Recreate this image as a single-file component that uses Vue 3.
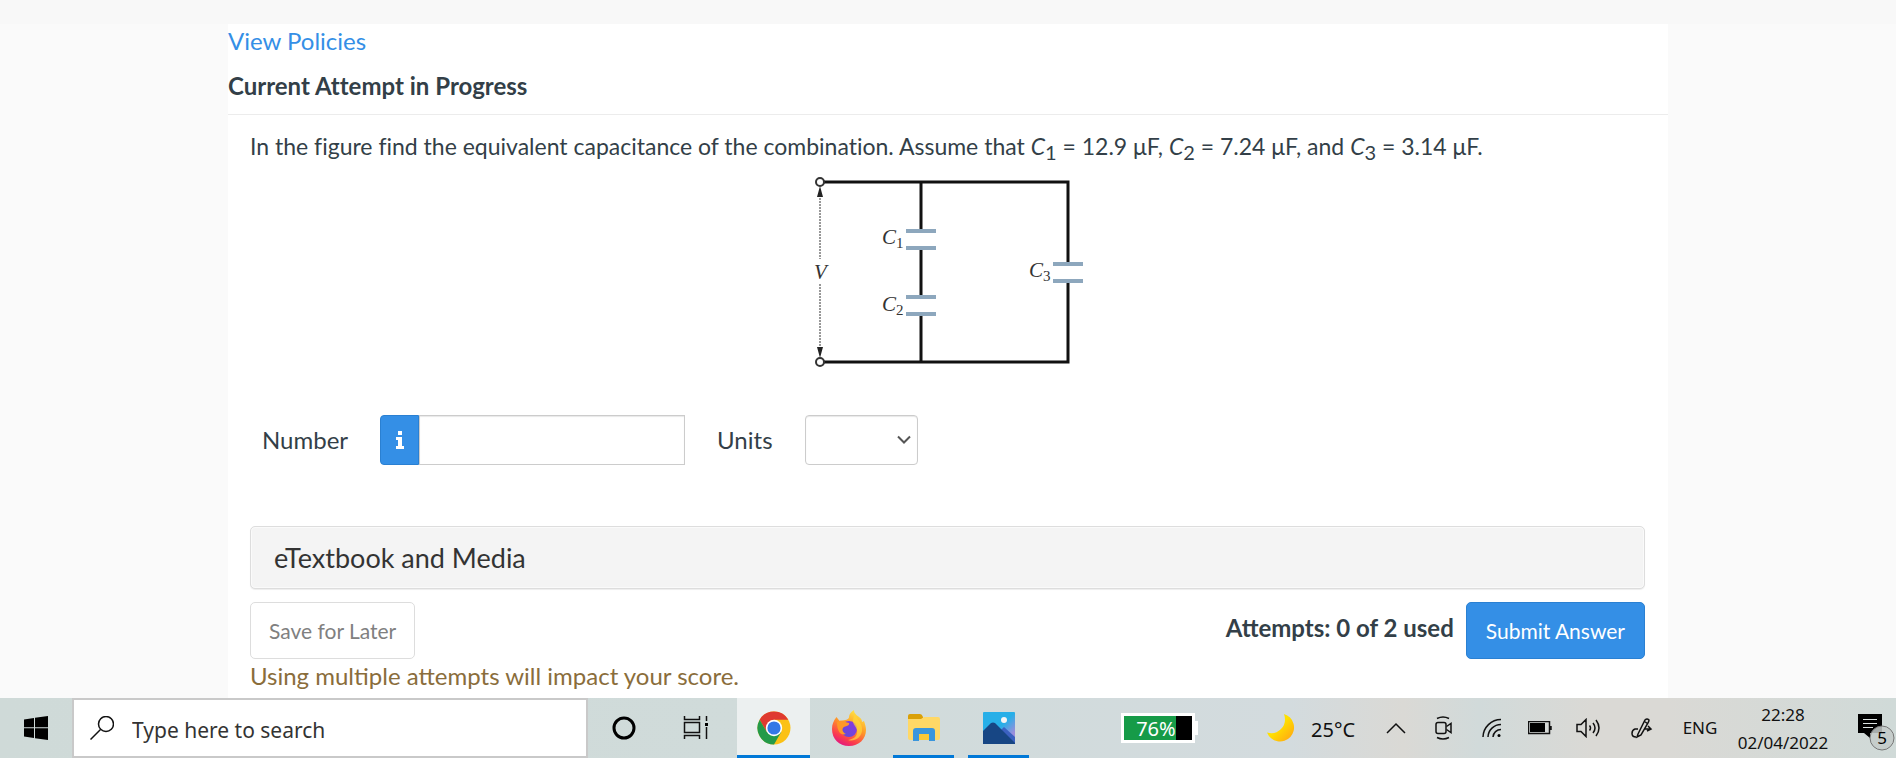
<template>
  <div class="screen">
    <main class="page">
      <section class="panel">
        <a class="policies" href="#policies">View Policies</a>
        <h1 class="status">Current Attempt in Progress</h1>

        <form class="question" @submit.prevent>
          <p class="prompt">
            In the figure find the equivalent capacitance of the combination. Assume that
            <template v-for="(c, i) in capacitors" :key="c.sub">
              <template v-if="i === 2">and </template><i>C</i><sub>{{ c.sub }}</sub> = {{ c.value }} μF{{ i === 2 ? '.' : ', ' }}
            </template>
          </p>

          <svg class="circuit" viewBox="0 0 274 192" role="img" aria-label="Circuit with three capacitors">
            <g class="wire">
              <path d="M9 10H257V93M257 110V190H9M110 10V60M110 77V126M110 143V190" />
            </g>
            <g class="plate">
              <path d="M95 59h30M95 76h30M95 125h30M95 142h30M242 92h30M242 109h30" />
            </g>
            <path class="measure" d="M9 20V87M9 112V180" />
            <path d="M9 14l3 11H6zM9 186l3 -11H6z" fill="#222" />
            <circle class="node" cx="9" cy="10" r="4" />
            <circle class="node" cx="9" cy="190" r="4" />
            <text x="3" y="107">V</text>
            <text x="71" y="72">C<tspan class="index" dy="4">1</tspan></text>
            <text x="71" y="139">C<tspan class="index" dy="4">2</tspan></text>
            <text x="218" y="105">C<tspan class="index" dy="4">3</tspan></text>
          </svg>

          <div class="answer">
            <label for="number">Number</label>
            <div class="number-group">
              <button type="button" class="info" aria-label="Information">
                <svg viewBox="0 0 10 18" width="10" height="18">
                  <path fill="#fff" d="M3 0h4v4H3zM1 6h6v9h2v3H1v-3h2V9H1z" />
                </svg>
              </button>
              <input id="number" v-model="number" type="text" autocomplete="off" />
            </div>
            <label for="units">Units</label>
            <div class="select-wrap">
              <select id="units" v-model="units">
                <option value=""></option>
                <option value="uF">μF</option>
              </select>
              <svg class="caret" viewBox="0 0 14 10" width="14" height="10">
                <path d="M1 1.500l6 6 6-6" />
              </svg>
            </div>
          </div>

          <button type="button" class="etextbook">eTextbook and Media</button>

          <div class="actions">
            <button type="button" class="btn save">Save for Later</button>
            <span class="attempts">Attempts: 0 of 2 used</span>
            <button type="submit" class="btn submit">Submit Answer</button>
          </div>
          <p class="warning">Using multiple attempts will impact your score.</p>
        </form>
      </section>
    </main>

    <footer class="taskbar">
      <button class="start" aria-label="Start">
        <svg viewBox="0 0 24 24" width="24" height="24">
          <path d="M0 3.500L10 2v9.300H0zM11 1.800L24 0v11.300H11zM0 12.300h10V22L0 20.500zM11 12.300h13V24l-13-1.800z" />
        </svg>
      </button>
      <label class="search">
        <svg class="line" viewBox="0 0 24 24" width="24" height="24">
          <circle cx="16" cy="8" r="7.500" />
          <path d="M10.500 13.500L.5 23.500" />
        </svg>
        <input type="text" placeholder="Type here to search" aria-label="Type here to search" />
      </label>
      <button class="tool" aria-label="Cortana">
        <svg viewBox="0 0 24 24" width="24" height="24">
          <circle cx="12" cy="12" r="10" fill="none" stroke="#000" stroke-width="3" />
        </svg>
      </button>
      <button class="tool" aria-label="Task view">
        <svg class="line" viewBox="0 0 26 24" width="26" height="24">
          <path d="M1.500 0v3.500h15V0M1.500 6.500h15v10h-15zM1.500 23v-3.500h15V23M23.500 0v5M23.500 11v12" />
          <path d="M22 7h3v3h-3z" fill="#000" stroke="none" />
        </svg>
      </button>

      <div class="apps">
        <button class="app active open" aria-label="Chrome">
          <svg viewBox="0 0 34 34" width="34" height="34">
            <circle cx="17" cy="17" r="16.500" fill="#fbc116" />
            <path d="M2.700 8.700A16.500 16.500 0 0 1 31.300 8.700H17L9.800 21.100z" fill="#df3a30" />
            <path d="M2.700 8.700A16.500 16.500 0 0 0 17 33.500L24.200 21.100H9.800z" fill="#249a49" />
            <circle cx="17" cy="17" r="8.200" fill="#fff" />
            <circle cx="17" cy="17" r="6.600" fill="#3478e6" />
          </svg>
        </button>
        <button class="app" aria-label="Firefox">
          <svg viewBox="0 0 34 36" width="34" height="36">
            <defs>
              <linearGradient id="fox" x1=".8" y1="0" x2=".3" y2="1">
                <stop offset="0" stop-color="#fff04a" />
                <stop offset=".45" stop-color="#ff9a27" />
                <stop offset=".8" stop-color="#fb3b4e" />
                <stop offset="1" stop-color="#e01783" />
              </linearGradient>
              <linearGradient id="globe" x1="1" y1="0" x2="0" y2="1">
                <stop offset="0" stop-color="#8f35e0" />
                <stop offset="1" stop-color="#5c50d6" />
              </linearGradient>
            </defs>
            <path fill="url(#fox)" d="M4.500 7l3 4 3-.5C15 10 17 9 17 7c0-3 2-5 5-7 0 4 3 5 5 7 2 1 3 3 3 5l2-1c1 3 2 6 2 9 0 9-7 16-17 16S0 29 0 19c0-5 1.500-8 4.500-12z" />
            <circle cx="17" cy="19" r="8" fill="url(#globe)" />
            <path fill="#ff9826" d="M5 12c4-3 8 0 12 1 1 2-2 3-5 4-3 2-1 6 2 7-5 2-9-2-9-12z" />
            <path fill="#ffd53a" d="M23 3c1 7 8 9 7 18-1 7-8 11-14 9 6-1 10-4 9-10-1-4-4-5-4-9 0-3 1-5 2-8z" opacity=".7" />
          </svg>
        </button>
        <button class="app open" aria-label="File Explorer">
          <svg viewBox="0 0 32 28" width="32" height="28">
            <path fill="#daa008" d="M0 6V2q0-2 2-2h10q2 0 3 3v3z" />
            <path fill="#ffd866" d="M0 5h13l3-2h14q2 0 2 2v19q0 2-2 2H2q-2 0-2-2z" />
            <path fill="#fbc937" d="M11 19h10v7H11z" />
            <path fill="#3a96dc" d="M5 27V17q0-3 3-3h16q3 0 3 3v10h-6v-7H11v7z" />
          </svg>
        </button>
        <button class="app open" aria-label="Photos">
          <svg viewBox="0 0 32 32" width="32" height="32">
            <defs>
              <linearGradient id="sky" x1="0" y1="0" x2="1" y2="1">
                <stop offset=".5" stop-color="#27afe8" />
                <stop offset=".8" stop-color="#9a8edc" />
              </linearGradient>
            </defs>
            <rect width="32" height="32" rx="1" fill="url(#sky)" />
            <path fill="#3b61c0" d="M16 20l5-5 11 10v7H16z" />
            <path fill="#174684" d="M0 19l8-8q2-1 4 0l20 20v1H0z" />
            <circle cx="21" cy="8" r="3" fill="#f5f5f5" />
          </svg>
        </button>
      </div>

      <div class="charge">
        <div class="charge-body">
          <div class="charge-level" :style="{ width: charge + '%' }">{{ charge }}%</div>
        </div>
        <div class="charge-tip"></div>
      </div>

      <button class="weather">
        <svg viewBox="0 0 28 28" width="28" height="28">
          <defs>
            <linearGradient id="moon" x1="0" y1="0" x2="1" y2="1">
              <stop offset=".45" stop-color="#ffe000" />
              <stop offset="1" stop-color="#ff9f16" />
            </linearGradient>
          </defs>
          <path fill="url(#moon)" d="M17 0A14 14 0 1 1 0 18.500Q8 21 14 15T17 0z" />
        </svg>
        <span>25°C</span>
      </button>

      <button class="tray" aria-label="Show hidden icons">
        <svg class="line" viewBox="0 0 20 12" width="20" height="12"><path d="M1 11l9-9 9 9" /></svg>
      </button>
      <button class="tray" aria-label="Meet now">
        <svg class="line" viewBox="0 0 18 24" width="18" height="24">
          <rect x="1" y="6.500" width="10" height="11" rx="2" />
          <path d="M11.500 10.500l4.500-3v9l-4.500-3M2 2.500q6-3 12 0M2 21.500q6 3 12 0" />
        </svg>
      </button>
      <button class="tray" aria-label="Wi-Fi">
        <svg class="line" viewBox="0 0 20 20" width="20" height="20">
          <path d="M1 19A18 18 0 0 1 19 1.500M6 19A13 13 0 0 1 19 6.500M11 19A8 8 0 0 1 19 11.500" />
          <circle cx="17" cy="17.500" r="1.500" fill="#000" stroke="none" />
        </svg>
      </button>
      <button class="tray" aria-label="Battery">
        <svg class="line" viewBox="0 0 24 14" width="24" height="14">
          <path d="M.5.5h21v12H.5zM23 5v4" />
          <path d="M2 2h15v9H2z" fill="#000" stroke="none" />
        </svg>
      </button>
      <button class="tray" aria-label="Volume">
        <svg class="line" viewBox="0 0 24 20" width="24" height="20">
          <path d="M1 6.500h4l5-5v17l-5-5H1zM13.500 7.500q2 2.500 0 5M17 5q4 5 0 10M20 2q6 8 0 16" />
        </svg>
      </button>
      <button class="tray pen" aria-label="Windows Ink">
        <svg class="line" viewBox="0 0 22 22" width="22" height="22">
          <path d="M7 17L14 3q2-2 4 0 0 1-1 3L10 18l-4 2zM13 4l4 3M7 12H4q-3 1-3 4.500T5 20M14 12h6M17 9l3 3-4 2" />
        </svg>
      </button>
      <button class="language">ENG</button>
      <button class="clock">
        <time>22:28</time>
        <time>02/04/2022</time>
      </button>
      <button class="notifications" aria-label="5 notifications">
        <svg viewBox="0 0 38 38" width="38" height="38">
          <path d="M0 1h24v19H12v5l-6-5H0z" />
          <path d="M5 6.500h14M5 10.500h14M5 14.500h10" stroke="#dce2e1" />
          <circle cx="24" cy="25" r="12" fill="#c4cac9" fill-opacity=".85" stroke="#777" />
          <text x="24" y="31" text-anchor="middle">5</text>
        </svg>
      </button>
    </footer>
  </div>
</template>

<script setup>
import { ref } from 'vue'

const number = ref('')
const units = ref('')
const charge = ref(76)

const capacitors = [
  { sub: 1, value: '12.9' },
  { sub: 2, value: '7.24' },
  { sub: 3, value: '3.14' },
]
</script>

<style>
body {
  margin: 0;
}
</style>

<style scoped>
.screen {
  display: flex;
  flex-direction: column;
  height: 100vh;
  overflow: hidden;
  box-sizing: border-box;
  font-family: Lato, sans-serif;
  font-size: 24px;
  line-height: 34px;
  color: #333f48;
  background: #fafafa;
}
.screen * {
  box-sizing: border-box;
}
button,
input,
select {
  margin: 0;
  padding: 0;
  font: inherit;
  color: inherit;
  border: 0;
  background: none;
}

.page {
  flex: 1;
  min-height: 0;
  display: flex;
  justify-content: center;
  border-top: 24px solid #f8f8f8;
}
.panel {
  flex: 0 1 1440px;
  background: #fff;
}
.policies {
  display: block;
  color: #348fe6;
  text-decoration: none;
}
.status {
  margin: 0;
  padding: 11px 0;
  font-size: 24px;
  font-weight: 700;
  font-variant-ligatures: none;
  border-bottom: 1px solid #ececec;
}
.question {
  padding: 14px 23px 0 22px;
}
.prompt {
  margin: 0;
  font-size: 23px;
  font-variant-ligatures: none;
}
.prompt sub {
  font-size: 20px;
  line-height: 0;
  vertical-align: -5px;
}

.circuit {
  display: block;
  width: 274px;
  height: 192px;
  margin: 9px auto 0;
  overflow: visible;
  font: italic 21px "Liberation Serif", serif;
  fill: #333;
}
.wire {
  fill: none;
  stroke: #111;
  stroke-width: 3;
}
.plate {
  stroke: #8da7bd;
  stroke-width: 4;
}
.measure {
  stroke: #333;
  stroke-dasharray: 2 1;
}
.node {
  fill: #fff;
  stroke: #333;
  stroke-width: 2;
}
.index {
  font-size: 15px;
  font-style: normal;
}

.answer {
  display: flex;
  align-items: center;
  gap: 32px;
  margin-top: 51px;
  padding-left: 12px;
}
.number-group {
  display: flex;
  width: 305px;
  height: 50px;
}
.info {
  display: flex;
  align-items: center;
  justify-content: center;
  width: 39px;
  background: #348fe6;
  border: 1px solid #2a80d2;
  border-radius: 4px 0 0 4px;
}
.number-group input {
  flex: 1;
  min-width: 0;
  padding: 0 12px;
  border: 1px solid #ccc;
  box-shadow: inset 0 1px 1px #e8e8e8;
}
.select-wrap {
  display: grid;
  align-items: center;
}
.select-wrap > * {
  grid-area: 1 / 1;
}
.select-wrap select {
  appearance: none;
  width: 113px;
  height: 50px;
  padding: 0 12px;
  border: 1px solid #ccc;
  border-radius: 4px;
  background: #fff;
  box-shadow: inset 0 1px 1px #e8e8e8;
}
.caret {
  justify-self: end;
  margin-right: 7px;
  fill: none;
  stroke: #555;
  stroke-width: 2;
  pointer-events: none;
}

.etextbook {
  display: block;
  width: 100%;
  height: 63px;
  margin-top: 61px;
  padding: 0 23px;
  text-align: left;
  font-size: 27px;
  color: #333;
  background: #f4f4f4;
  border: 1px solid #ddd;
  border-radius: 5px;
  box-shadow: 0 1px 1px #eee, inset 0 0 0 1px #fafafa;
}
.actions {
  display: flex;
  align-items: center;
  margin-top: 13px;
}
.btn {
  height: 57px;
  padding: 0 19px;
  font-size: 21px;
  border: 1px solid #ddd;
  border-radius: 5px;
}
.save {
  padding: 0 18px;
  color: #808080;
  background: #fff;
}
.attempts {
  margin-left: auto;
  padding: 0 12px 5px 0;
  font-weight: 700;
}
.submit {
  color: #fff;
  background: #348fe6;
  border-color: #2a80d2;
}
.warning {
  margin: 0;
  color: #8a6d3b;
}

.taskbar {
  display: flex;
  align-items: center;
  height: 60px;
  font-family: "Segoe UI", "Noto Sans", sans-serif;
  font-size: 20px;
  line-height: 28px;
  color: #111;
  background: linear-gradient(90deg, #cfdad8, #d0dbda 40%, #d3dbde 68%, #dad9d5 74%, #d1dada 78%, #dad9d5 84%, #dad9d5 88%, #d0dad8);
}
.taskbar > * {
  flex-shrink: 0;
}
.taskbar svg {
  display: block;
}
.line {
  fill: none;
  stroke: #111;
  stroke-width: 1.5;
}
.start,
.tool {
  display: flex;
  align-items: center;
  justify-content: center;
  width: 72px;
  height: 60px;
}
.search {
  display: flex;
  align-items: center;
  gap: 18px;
  width: 516px;
  height: 60px;
  padding-left: 16px;
  background: #fff;
  border: 2px solid #c9c9c9;
}
.search input {
  flex: 1;
  min-width: 0;
  padding-top: 3px;
  font-size: 21px;
  outline: 0;
}
.search input::placeholder {
  color: #333;
  opacity: 1;
}
.apps {
  display: flex;
  margin-left: 4px;
}
.app {
  display: grid;
  place-items: center;
  width: 61px;
  height: 60px;
  margin: 0 7px;
  border-top: 3px solid transparent;
  border-bottom: 3px solid transparent;
}
.app.open {
  border-bottom-color: #0078d7;
}
.app.active {
  width: 73px;
  margin: 0 1px;
  background: #ecf0f0;
}
.charge {
  display: flex;
  align-items: center;
  margin-left: auto;
}
.charge-body {
  width: 74px;
  height: 30px;
  background: #000;
  border: 3px solid #fff;
}
.charge-level {
  height: 24px;
  line-height: 26px;
  text-align: right;
  color: #fff;
  background: #169b48;
}
.charge-tip {
  width: 3px;
  height: 14px;
  background: #fff;
}
.weather {
  display: flex;
  align-items: center;
  gap: 16px;
  width: 105px;
  margin-left: 69px;
}
.weather span {
  padding-top: 3px;
}
.tray {
  display: grid;
  place-items: center;
  width: 48px;
  height: 60px;
}
.pen {
  width: 60px;
}
.language {
  width: 56px;
  font-size: 17px;
}
.clock {
  display: flex;
  flex-direction: column;
  align-items: center;
  width: 110px;
  padding-top: 2px;
  font-size: 17px;
}
.notifications {
  width: 58px;
  padding: 8px 0 0 20px;
}
.notifications text {
  font-size: 17px;
}
</style>
